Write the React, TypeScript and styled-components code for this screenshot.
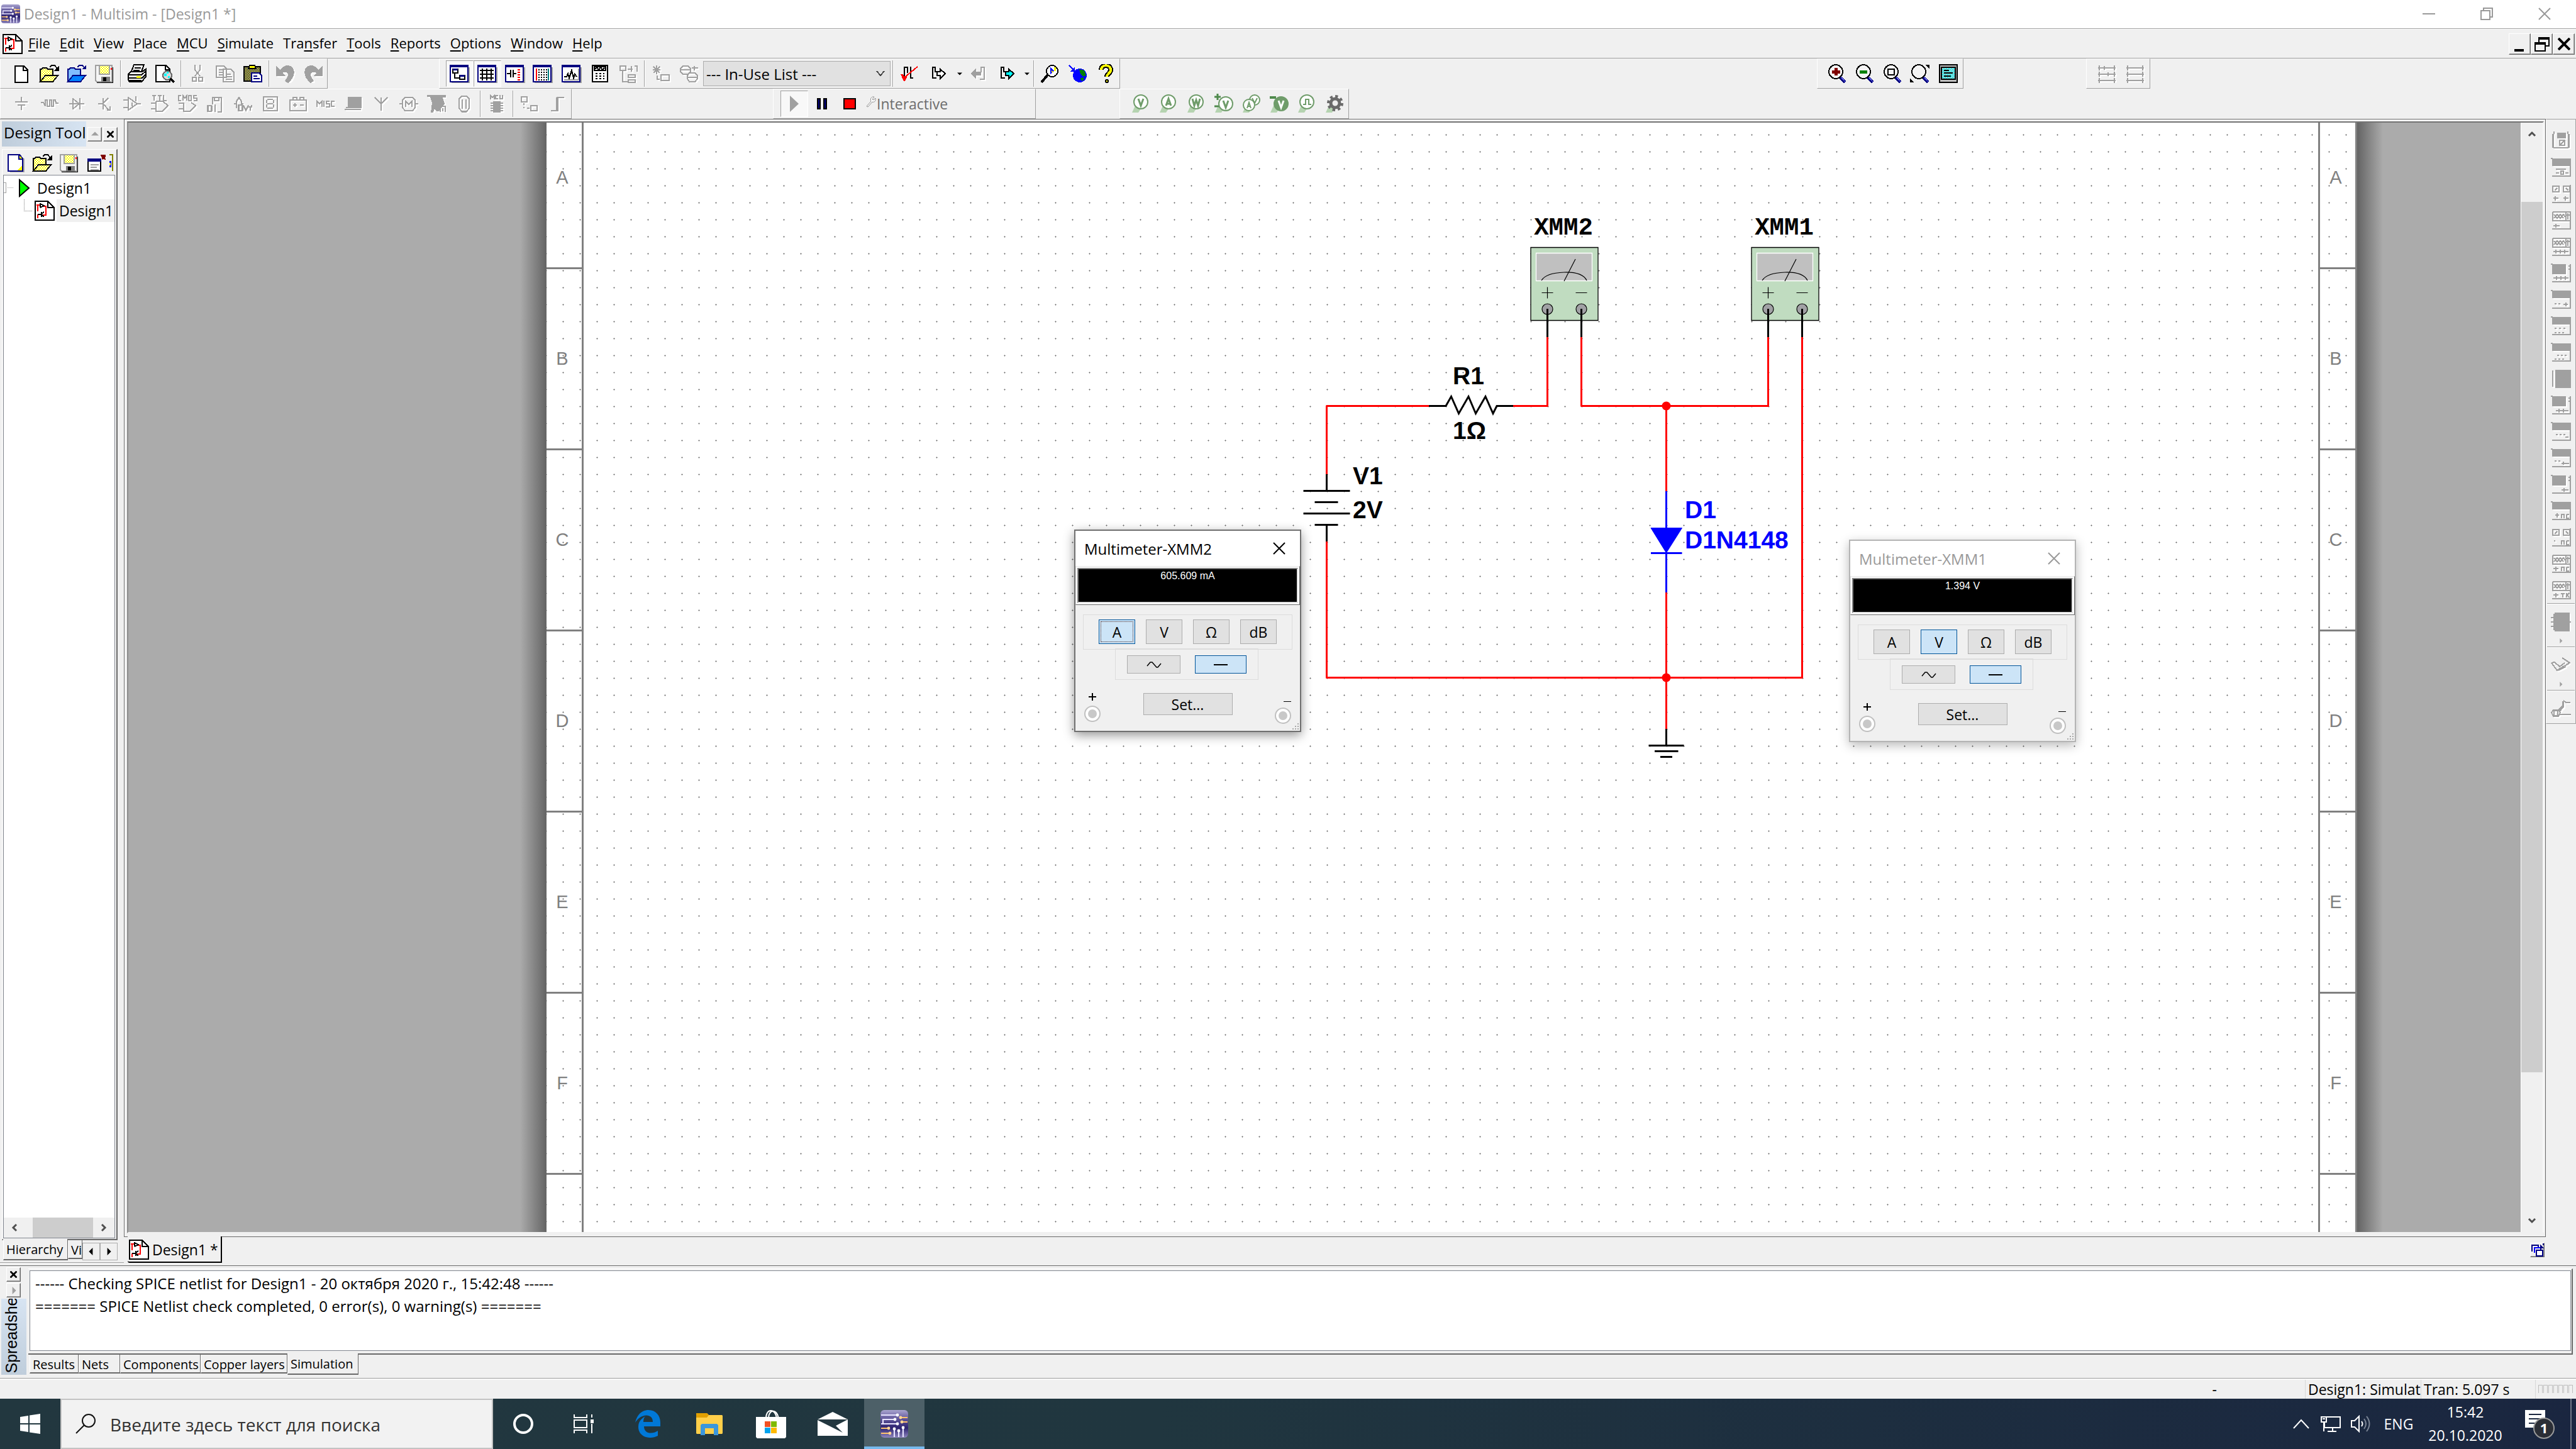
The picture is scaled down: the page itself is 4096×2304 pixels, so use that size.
import React from "react";
import styled, { createGlobalStyle, css } from "styled-components";

const UI = `"Open Sans", "Noto Sans", sans-serif`;
const FACE = "#f0f0f0";
const SHADE = "#a0a0a0";
const DARK = "#696969";
const NAVY = "#000080";

const Global = createGlobalStyle`
  * { box-sizing: border-box; }
  html, body, #root { height: 100%; }
  body { margin: 0; overflow: hidden; background: ${FACE}; font-family: ${UI}; font-size: 24px; color: #000; }
  button, input, select { font: inherit; color: inherit; margin: 0; padding: 0; border: 0; background: none; border-radius: 0; }
  svg { display: block; flex: none; }
`;

/* ---------- shell ---------- */

const Desktop = styled.div`
  display: flex;
  flex-direction: column;
  height: 100vh;
`;

const TitleBar = styled.header`
  display: flex;
  align-items: center;
  flex: none;
  height: 46px;
  padding: 0 4px 2px 2px;
  gap: 6px;
  background: #fff;
  border-bottom: 1px solid ${SHADE};
  color: #999;
`;

const Caption = styled.h1`
  flex: 1;
  margin: 0;
  font-size: 23px;
  font-weight: 400;
`;

const CaptionButtons = styled.div`
  display: flex;
`;

const CaptionButton = styled.button`
  display: grid;
  place-items: center;
  width: 92px;
  height: 43px;
`;

const MenuBar = styled.nav`
  display: flex;
  align-items: center;
  flex: none;
  height: 47px;
  padding: 0 2px 0 4px;
  border-top: 1px solid #fff;
  border-bottom: 1px solid ${SHADE};
`;

const MenuList = styled.div`
  display: flex;
  flex: 1;
  gap: 15px;
  padding: 0 0 3px 9px;
`;

const MenuItem = styled.button`
  font-size: 22px;
  line-height: 32px;
  u { text-underline-offset: 3px; text-decoration-thickness: 2px; }
`;

const raised = css`
  border: 1px solid;
  border-color: #fff ${DARK} ${DARK} #fff;
  box-shadow: inset -1px -1px 0 ${SHADE};
`;

const ChildButton = styled.button`
  ${raised}
  display: grid;
  place-items: center;
  width: 35px;
  height: 34px;
`;

const ToolRow = styled.div`
  display: flex;
  flex: none;
  height: 48px;
`;

const ToolGroup = styled.div<{ $before?: number; $lead?: number }>`
  display: flex;
  align-items: center;
  margin-left: ${(p) => p.$before ?? 0}px;
  padding-left: ${(p) => p.$lead ?? 11}px;
  border: 1px solid;
  border-color: #fff ${SHADE} ${SHADE} #fff;
`;

const ToolButton = styled.button<{ $on?: boolean; $w?: number }>`
  display: grid;
  place-items: center;
  flex: none;
  width: ${(p) => p.$w ?? 44}px;
  height: 42px;
  ${(p) =>
    p.$on &&
    css`
      background: #f8f8f8;
      border: 1px solid;
      border-color: ${SHADE} #fff #fff ${SHADE};
    `}
`;

const Divider = styled.i`
  width: 2px;
  height: 42px;
  margin: 0 3px;
  background: linear-gradient(90deg, ${SHADE} 50%, #fff 50%);
`;

const SelectWrap = styled.label`
  position: relative;
  display: block;
  width: 298px;
  svg { position: absolute; right: 9px; top: 15px; }
`;

const Select = styled.select`
  appearance: none;
  width: 100%;
  height: 40px;
  padding: 0 4px;
  background: #e1e1e1;
  border: 1px solid #adadad;
`;

const Mode = styled.span`
  width: 252px;
  color: #6d6d6d;
  font-size: 23px;
  line-height: 32px;
`;

/* ---------- workspace ---------- */

const Workspace = styled.main`
  display: flex;
  flex: 1;
  min-height: 0;
`;

const Toolbox = styled.aside`
  display: flex;
  flex-direction: column;
  flex: none;
  width: 197px;
  padding: 3px 10px 0 3px;
  border-top: 1px solid ${SHADE};
  border-bottom: 1px solid ${SHADE};
  margin-bottom: 4px;
`;

const PaneHead = styled.div`
  display: flex;
  align-items: center;
  gap: 2px;
  height: 40px;
`;

const PaneTitle = styled.h2`
  flex: 1;
  min-width: 0;
  height: 40px;
  margin: 0;
  padding-left: 3px;
  overflow: hidden;
  white-space: nowrap;
  font-size: 24px;
  font-weight: 400;
  line-height: 36px;
  background: linear-gradient(90deg, #bfcddb, #d7e4f2);
`;

const PinButton = styled.button`
  ${raised}
  display: grid;
  place-items: center;
  flex: none;
  width: 23px;
  height: 23px;
`;

const ToolboxBody = styled.div`
  display: flex;
  flex-direction: column;
  flex: 1;
  min-height: 0;
  margin-top: 4px;
  padding: 0 2px 1px 1px;
  border: 1px solid;
  border-color: #fff ${DARK} ${DARK} #fff;
  border-width: 1px 2px 2px 1px;
`;

const ToolboxIcons = styled.div`
  display: flex;
  height: 40px;
  padding-right: 4px;
  overflow: hidden;
`;

const SmallButton = styled.button`
  display: grid;
  place-items: center;
  flex: none;
  width: 43px;
  height: 42px;
  &:first-child { width: 40px; }
`;

const Tree = styled.ul`
  display: flex;
  flex-direction: column;
  flex: 1;
  margin: 0;
  padding: 2px 0 0;
  overflow: hidden;
  list-style: none;
  background: #fff;
  border: 1px solid #828790;
`;

const TreeItem = styled.li<{ $sel?: boolean }>`
  display: flex;
  align-items: center;
  height: 36px;
  gap: 3px;
  white-space: nowrap;
  font-size: 23px;
  line-height: 36px;
  span {
    padding: 0 4px;
    background: ${(p) => (p.$sel ? FACE : "transparent")};
  }
`;

const HScroll = styled.div`
  display: flex;
  height: 32px;
  margin-top: auto;
  background: ${FACE};
`;

const ScrollButton = styled.button<{ $w: number; $h: number }>`
  display: grid;
  place-items: center;
  width: ${(p) => p.$w}px;
  height: ${(p) => p.$h}px;
`;

const Part = styled.div<{ $grow: number; $thumb?: boolean }>`
  flex: ${(p) => p.$grow} 0 0;
  background: ${(p) => (p.$thumb ? "#cdcdcd" : "transparent")};
`;

const TabLine = styled.div<{ $pad?: number; $foot?: number }>`
  display: flex;
  align-items: flex-start;
  padding-left: ${(p) => p.$pad ?? 0}px;
  padding-bottom: ${(p) => p.$foot ?? 0}px;
`;

const Tab = styled.button<{ $on?: boolean; $w: number }>`
  width: ${(p) => p.$w}px;
  height: ${(p) => (p.$on ? 34 : 30)}px;
  margin-top: ${(p) => (p.$on ? -2 : 0)}px;
  padding: 2px 0 0 4px;
  overflow: hidden;
  text-align: left;
  white-space: nowrap;
  font-size: 20px;
  line-height: 28px;
  background: ${FACE};
  border: solid;
  border-width: 0 1px 2px 1px;
  border-color: ${DARK} ${DARK} ${DARK} #fff;
`;

const Spinner = styled.button`
  display: grid;
  place-items: center;
  width: 28px;
  height: 28px;
  margin-top: 4px;
  border: 1px solid #adadad;
  background: ${FACE};
`;

const DocArea = styled.section`
  display: flex;
  flex-direction: column;
  flex: 1;
  min-width: 0;
`;

const Frame = styled.div`
  display: flex;
  flex: 1;
  min-height: 0;
  padding: 3px 2px 5px 4px;
  border: 1px solid ${DARK};
  box-shadow: inset 1px 1px 0 #fff;
`;

const Viewport = styled.div`
  display: flex;
  flex: 1;
  min-width: 0;
  border: 2px solid;
  border-color: #747474 #f8f8f8 #f0f0f0 #8c8c8c;
`;

const Canvas = styled.div`
  position: relative;
  flex: 1;
  min-width: 0;
  overflow: hidden;
  background: #ababab;
  svg.sheet { width: 100%; height: 100%; }
`;

const VScroll = styled.div`
  display: flex;
  flex-direction: column;
  width: 35px;
  border-left: 1px solid #fff;
  background: ${FACE};
`;

const DocTabs = styled.div`
  display: flex;
  align-items: flex-start;
  justify-content: space-between;
  height: 45px;
  padding: 0 2px 0 6px;
`;

const DocTab = styled.button`
  display: flex;
  align-items: center;
  gap: 5px;
  height: 42px;
  margin-top: -1px;
  padding: 2px 4px 0 2px;
  font-size: 23px;
  background: ${FACE};
  border: solid #000;
  border-width: 0 2px 2px 0;
  border-bottom-left-radius: 3px;
`;

const WindowsSlot = styled.div`
  padding-top: 9px;
`;

const Instruments = styled.div`
  display: flex;
  flex-direction: column;
  align-items: center;
  align-self: flex-start;
  width: 48px;
  padding: 13px 1px 2px 0;
  border: 1px solid ${SHADE};
  border-left: 1px solid #fff;
  hr {
    width: 44px;
    margin: 0 0 7px;
    border: 0;
    border-top: 1px solid ${SHADE};
    border-bottom: 1px solid #fff;
  }
`;

const InstrumentButton = styled.button`
  display: grid;
  place-items: center;
  width: 44px;
  height: 42px;
`;

const MoreButton = styled.button`
  display: grid;
  place-items: center;
  width: 44px;
  height: 18px;
`;

/* ---------- multimeter ---------- */

const Meter = styled.section<{ $x: number; $y: number; $active: boolean }>`
  position: absolute;
  left: ${(p) => p.$x}px;
  top: ${(p) => p.$y}px;
  width: 361px;
  padding-bottom: 7px;
  background: ${FACE};
  border: 2px solid ${(p) => (p.$active ? "#6f6f6f" : "#b4b4b4")};
  box-shadow: 0 5px 16px rgba(0, 0, 0, ${(p) => (p.$active ? 0.42 : 0.28)});
`;

const MeterTitle = styled.header<{ $active: boolean }>`
  display: flex;
  align-items: center;
  justify-content: space-between;
  height: 56px;
  padding: 0 22px 0 14px;
  background: #fff;
  color: ${(p) => (p.$active ? "#000" : "#999")};
`;

const CloseButton = styled.button`
  display: grid;
  place-items: center;
  width: 22px;
  height: 22px;
`;

const ReadingFrame = styled.div`
  padding: 2px;
  background: #fff;
  border: 1px solid;
  border-color: #e3e3e3 ${DARK} ${DARK} #e3e3e3;
`;

const Reading = styled.output`
  display: block;
  height: 56px;
  padding-top: 2px;
  background: #000;
  border: 2px solid;
  border-color: #808080 #e3e3e3 #e3e3e3 #808080;
  color: #fff;
  font-family: "Liberation Sans", Arial, sans-serif;
  font-size: 16px;
  line-height: 18px;
  text-align: center;
`;

const ModeGroup = styled.div`
  display: flex;
  justify-content: center;
  gap: 17px;
  height: 56px;
  margin: 15px 12px 0;
  padding-top: 7px;
  border: 1px solid #dcdcdc;
`;

const WaveGroup = styled(ModeGroup)`
  width: 228px;
  height: 50px;
  margin: -2px auto 0 63px;
  padding-top: 10px;
  gap: 23px;
`;

const MeterButton = styled.button<{ $w: number; $h: number; $on?: boolean; $focus?: boolean }>`
  display: grid;
  place-items: center;
  width: ${(p) => p.$w}px;
  height: ${(p) => p.$h}px;
  font-size: 23px;
  background: ${(p) => (p.$on ? "#cce4f7" : "#e1e1e1")};
  border: 1px solid ${(p) => (p.$on ? "#005499" : "#adadad")};
  outline: ${(p) => (p.$focus ? "1px dotted #402020" : "none")};
  outline-offset: -4px;
`;

const MeterFoot = styled.div`
  display: flex;
  justify-content: space-between;
  align-items: flex-start;
  margin-top: 18px;
  padding: 0 11px;
`;

const SetSlot = styled.div`
  padding-top: 3px;
`;

const Grip = styled.svg`
  position: absolute;
  right: 1px;
  bottom: 1px;
`;

/* ---------- spreadsheet & status ---------- */

const Sheet = styled.section`
  display: flex;
  flex: none;
  height: 179px;
  border-top: 1px solid ${DARK};
`;

const SheetRail = styled.div`
  display: flex;
  flex-direction: column;
  gap: 2px;
  width: 45px;
  padding: 2px 3px 5px 2px;
`;

const RailButton = styled(PinButton)`
  margin-left: 8px;
`;

const RailTitle = styled.h2`
  display: flex;
  align-items: flex-end;
  flex: 1;
  min-height: 0;
  margin: 0;
  padding: 0 0 3px 1px;
  overflow: hidden;
  background: linear-gradient(0deg, #bfcddb, #d7e4f2);
  font: 400 25px/30px "Liberation Sans", Arial, sans-serif;
  span {
    flex: none;
    white-space: nowrap;
    writing-mode: vertical-rl;
    transform: rotate(180deg);
  }
`;

const SheetMain = styled.div`
  display: flex;
  flex-direction: column;
  flex: 1;
  min-width: 0;
  padding: 4px 5px 0 0;
`;

const ListFrame = styled.div`
  flex: 1;
  min-height: 0;
  padding: 2px 1px 4px 2px;
  border: solid;
  border-width: 1px 2px 2px 0;
  border-color: #fff ${DARK} ${DARK} #fff;
`;

const Log = styled.div`
  height: 100%;
  padding: 2px 8px;
  background: #fff;
  border: 1px solid #828790;
  line-height: 36px;
  p { margin: 0; }
`;

const StatusBar = styled.footer`
  display: flex;
  flex: none;
  height: 33px;
  padding-top: 2px;
  border-top: 1px solid ${SHADE};
  box-shadow: inset 0 2px 0 #fafafa;
  font-size: 23px;
  line-height: 31px;
`;

const StatusCell = styled.div<{ $w: number }>`
  width: ${(p) => p.$w}px;
  height: 30px;
  padding-left: 4px;
  overflow: hidden;
  white-space: nowrap;
  border-left: 1px solid #d7d7d7;
`;

const StatusMain = styled.div`
  flex: 1;
  padding-right: 140px;
  text-align: right;
`;

/* ---------- taskbar ---------- */

const Taskbar = styled.footer`
  display: flex;
  flex: none;
  height: 80px;
  background: linear-gradient(90deg, #22373f, #20363f 45%, #1a2640);
  color: #fff;
  font-size: 23px;
`;

const TaskButton = styled.button<{ $on?: boolean }>`
  display: grid;
  place-items: center;
  width: 96px;
  height: 80px;
  ${(p) =>
    p.$on &&
    css`
      background: #4d6068;
      box-shadow: inset 0 -4px 0 #76b9ed;
    `}
`;

const Apps = styled.div`
  display: flex;
  gap: 2px;
  margin-left: 6px;
  flex: 1;
`;

const Search = styled.label`
  display: flex;
  align-items: center;
  gap: 22px;
  width: 688px;
  padding-left: 22px;
  background: #f2f2f2;
  border: 2px solid #c3c3c3;
  color: #000;
  input {
    flex: 1;
    padding-top: 2px;
    font-size: 28px;
    outline: none;
    &::placeholder { color: #333; opacity: 1; }
  }
`;

const Tray = styled.div`
  display: flex;
  align-items: center;
  button { flex: none; }
`;

const TrayButton = styled.button<{ $w: number }>`
  display: grid;
  place-items: center;
  width: ${(p) => p.$w}px;
  height: 80px;
  line-height: 37px;
  white-space: pre;
`;

const Peek = styled.button`
  width: 9px;
  height: 80px;
  border-left: 2px solid #6f7888;
`;

/* ---------- icons ---------- */

type IconProps = { w?: number; h?: number; children: React.ReactNode };
const Icon = ({ w = 32, h = 30, children }: IconProps) => (
  <svg width={w} height={h} viewBox={`0 0 ${w} ${h}`} shapeRendering="crispEdges" fill="none" strokeWidth="2" aria-hidden="true">
    {children}
  </svg>
);

/* A disabled glyph: the grey shape over its white drop edge. */
const Grey = ({ d, fill, w, h }: { d: string; fill?: string; w?: number; h?: number }) => (
  <Icon w={w} h={h}>
    <g transform="translate(2 2)">
      <path d={d} stroke="#fff" />
      {fill && <path d={fill} fill="#fff" />}
    </g>
    <path d={d} stroke={SHADE} />
    {fill && <path d={fill} fill={SHADE} />}
  </Icon>
);

const HiddenDefs = styled.svg`
  position: absolute;
`;

const Defs = () => (
  <HiddenDefs width="0" height="0" aria-hidden="true">
    <defs>
      <pattern id="hatch" width="4" height="4" patternUnits="userSpaceOnUse">
        <rect width="4" height="4" fill="#ff0" />
        <path d="M0 0h2v2H0zM2 2h2v2H2z" fill="#fff" />
      </pattern>
      <pattern id="olive" width="4" height="4" patternUnits="userSpaceOnUse">
        <rect width="4" height="4" fill="#808000" />
        <path d="M0 0h2v2H0zM2 2h2v2H2z" fill="#808080" />
      </pattern>
      <pattern id="aqua" width="4" height="4" patternUnits="userSpaceOnUse">
        <rect width="4" height="4" fill="#0ff" />
        <path d="M0 0h2v2H0zM2 2h2v2H2z" fill="#c0c0c0" />
      </pattern>
      <linearGradient id="chip" x1="0" y1="0" x2="0" y2="1">
        <stop offset="0" stopColor="#a9a4cf" />
        <stop offset=".35" stopColor="#5a5096" />
        <stop offset=".65" stopColor="#2c2270" />
        <stop offset="1" stopColor="#8e86bd" />
      </linearGradient>
    </defs>
  </HiddenDefs>
);

const NewFile = () => (
  <Icon w={26}>
    <path d="M3 3h14l6 6v20H3z" fill="#fff" stroke="#000" />
    <path d="M16 3v7h7" stroke="#000" />
  </Icon>
);
const NewDesign = () => (
  <Icon w={30}>
    <path d="M28 8v22H6" stroke="#aaa" />
    <path d="M3 2h18l5 6v20H3z" fill="#fff" stroke={NAVY} />
    <path d="M20 3l6 6h-6zM25 20v7h-8z" fill="#ff0" />
    <path d="M20 3v6h6" stroke={NAVY} />
  </Icon>
);
const OpenFile = ({ blue }: { blue?: boolean }) => {
  const ink = blue ? NAVY : "#000";
  return (
    <Icon>
      <path d="M2 28V8h2l2-2h6l2 2h8v10" fill={blue ? "#7fbcff" : "url(#hatch)"} stroke={ink} />
      <path d="M10 18h20l-8 10H2z" fill={blue ? "#0080ff" : "url(#hatch)"} stroke={ink} />
      <path d="M17 5l3-3h5l4 5" stroke={ink} />
      <path d={blue ? "M24 8h7V2z" : "M23 11h9V3z"} fill={ink} />
    </Icon>
  );
};
const Floppy = () => (
  <Icon>
    <path d="M4 29h25V5" stroke="#000" />
    <path d="M2 2h26v26H4l-2-2z" fill="#f4f4f4" stroke={SHADE} />
    <path d="M8 2h16v14H8z" fill="url(#hatch)" stroke={SHADE} />
    <path d="M11 20h14v9H11z" fill="#808080" />
    <path d="M14 21h5v6h-5z" fill="#000" />
    <path d="M26 6h2v3h-2z" fill="red" />
  </Icon>
);
const Printer = () => (
  <Icon>
    <path d="M11 1h16l-5 13H6z" fill="#fff" stroke="#000" />
    <path d="M12 6h10M10 10h10" stroke="#000" />
    <path d="M2 16l4-4h18l6-4v12l-7 8H4l-2-3z" fill="#fff" stroke="#000" />
    <path d="M2 17h21l7-6M2 22h22l6-6M3 26h20" stroke="#000" />
    <path d="M15 19h7v3h-7z" fill="#ff0" />
  </Icon>
);
const Preview = () => (
  <Icon>
    <path d="M2 2h16l6 6v20H2z" fill="#fff" stroke="#000" />
    <path d="M17 2v7h7" stroke="#000" />
    <circle cx="20" cy="18" r="7" fill="#d8d8d8" stroke="#666" />
    <path d="M15 15h4v-3h3v3h-3v4h-4zM21 19h3v3h-3z" fill="#0ff" />
    <path d="M25 23l6 6" stroke="#000" strokeWidth="4" />
  </Icon>
);
const Paste = () => (
  <Icon>
    <path d="M2 4h26v23H2z" fill="url(#olive)" stroke="#000" />
    <path d="M9 7l2-5h8l2 5z" fill="#ff0" stroke="#000" />
    <path d="M14 14h12l4 4v10H14z" fill="#fff" stroke={NAVY} />
    <path d="M17 19h6M17 23h10" stroke={NAVY} />
  </Icon>
);
const Panel = ({ children }: { children: React.ReactNode }) => (
  <Icon>
    <path d="M31 5v25H3" stroke={SHADE} />
    <path d="M1 3h28v25H1z" fill="#fff" stroke={NAVY} />
    <path d="M0 1h30v4H0z" fill={NAVY} />
    {children}
  </Icon>
);
const PanelTree = () => (
  <Panel>
    <path d="M5 8h8v6H5zM16 18h8v6h-8zM8 14v8h8" stroke="#000" />
    <path d="M5 7h8v3H5zM16 17h8v3h-8z" fill={NAVY} />
  </Panel>
);
const PanelGrid = () => (
  <Panel>
    <path d="M4 10h22M4 16h22M4 22h22M8 7v19M15 7v19M22 7v19" stroke="#000" />
  </Panel>
);
const PanelParts = () => (
  <Panel>
    <path d="M3 15h6M9 9v12M13 9v12M13 15h5" stroke="#000" />
    <path d="M22 8v18" stroke="red" strokeWidth="4" strokeDasharray="2 2" />
  </Panel>
);
const PanelList = () => (
  <Panel>
    <path d="M6 7v19" stroke="red" />
    <path d="M25 7v19" stroke="#008080" />
    <path d="M10 8v18M14 8v18M18 8v18M22 8v18" stroke="#000" strokeDasharray="2 2" />
  </Panel>
);
const PanelGraph = () => (
  <Panel>
    <path d="M27 7v18H4" stroke={SHADE} />
    <path d="M4 20h4l2-5 2 7 4-12 3 12 2-6 3 4" stroke="#000" />
  </Panel>
);
const Calculator = () => (
  <Icon>
    <path d="M3 2h24v26H3z" fill="#fff" stroke="#000" />
    <path d="M6 4h18v6H6z" fill="#fff" stroke="#000" />
    <path d="M7 8l3-3 3 4 3-4 3 4 3-3" stroke="#000" />
    <path d="M8 15h14M8 19h14M8 23h14" stroke="#000" strokeDasharray="3 3" />
  </Icon>
);
const CheckRule = () => (
  <Icon>
    <path d="M7 4v18M17 4v18M7 5h5v9M21 22h-5" stroke="#000" />
    <path d="M6 22L28 4" stroke="red" />
    <path d="M1 16h4l2 4 4-3v4l-3 6H6z" fill="red" />
  </Icon>
);
const Transfer = ({ fill }: { fill: string }) => (
  <Icon>
    <path d="M4 4v18h6M4 5h4v7h4" stroke="#000" />
    <path d="M11 12h5V8l8 7-8 8v-5h-5z" fill={fill} stroke="#000" />
  </Icon>
);
const FindExample = () => (
  <Icon>
    <path d="M2 29l10-12" stroke="#000" strokeWidth="4" />
    <circle cx="19" cy="11" r="9" fill="#fff" stroke="#000" />
    <path d="M16 5v11l6-5z" fill="#00f" />
    <path d="M18 9v4h3zM22 5h3v6h-3z" fill="#ff0" />
  </Icon>
);
const Globe = () => (
  <Icon>
    <circle cx="19" cy="18" r="11" fill="#00f" />
    <path d="M18 8l8 2 3 8-5 2-4-4zM20 22l5-1v5h-4z" fill="#008000" />
    <path d="M2 2l9 9" stroke="#00f" />
    <path d="M11 4v8H4z" fill="#00f" />
  </Icon>
);
const Help = () => (
  <Icon>
    <path d="M9 9c0-9 15-9 15 0 0 6-6 6-6 11" stroke="#000" strokeWidth="8" />
    <path d="M9 9c0-9 15-9 15 0 0 6-6 6-6 11" stroke="#ff0" strokeWidth="4" />
    <circle cx="18" cy="27" r="2" fill="#ff0" stroke="#000" />
  </Icon>
);
const Lens = ({ children }: { children?: React.ReactNode }) => (
  <Icon>
    <path d="M20 20l9 9" stroke={NAVY} strokeWidth="5" />
    <path d="M21 19l8 9" stroke="#8080ff" strokeWidth="1" />
    <circle cx="14" cy="12" r="11" fill="#f4f4f4" stroke="#000" />
    {children}
  </Icon>
);
const FullScreen = () => (
  <Icon>
    <path d="M2 1h28v28H2z" fill="#c0c0c0" stroke="#000" />
    <path d="M5 5h22v19H5z" fill="url(#aqua)" stroke="#000" />
    <path d="M9 10h8M9 14h14M9 19h11" stroke="#000" />
  </Icon>
);
const SchematicDoc = () => (
  <Icon w={32} h={32}>
    <path d="M1 1h20l10 10v20H1z" fill="#fff" stroke="#000" />
    <path d="M21 1v10h10" stroke="#000" />
    <path d="M3 7h5M14 9h4v14h-6M5 7v10M5 28v-6" stroke="red" />
    <path d="M9 4v7M9 5l6 3-6 3M11 18v8M5 22h6M11 21l4-3M11 22l4 4" stroke="#000" />
  </Icon>
);
const Chip = ({ size }: { size: number }) => (
  <svg width={size} height={size} viewBox="0 0 44 44" fill="none" strokeWidth="2.2" aria-hidden="true">
    <rect width="44" height="44" rx="6" fill="url(#chip)" />
    <path d="M1 8h25M4 22v-7h18M1 22h25M22 43V29M29 43V33M36 43V28" stroke="#e8e4ff" />
    <path d="M32 12h11M34 19h9M1 29h12M1 37h13" stroke="#ffc36b" />
    <g fill="#fff">
      <circle cx="27" cy="8" r="2.4" /><circle cx="23" cy="15" r="2.4" /><circle cx="27" cy="22" r="2.4" />
      <circle cx="22" cy="30" r="2.4" /><circle cx="29" cy="33" r="2.4" /><circle cx="36" cy="28" r="2.4" />
    </g>
    <g fill="#ffd695">
      <circle cx="32" cy="12" r="2.4" /><circle cx="34" cy="19" r="2.4" /><circle cx="13" cy="29" r="2.4" /><circle cx="15" cy="37" r="2.4" />
    </g>
  </svg>
);
const Cross = ({ s = 20, c = "currentColor", w = 2 }: { s?: number; c?: string; w?: number }) => (
  <svg width={s} height={s} viewBox="0 0 20 20" aria-hidden="true">
    <path d="M1 1l18 18M19 1L1 19" stroke={c} strokeWidth={w} />
  </svg>
);
const Chevron = ({ turn = 0 }: { turn?: number }) => (
  <svg width="14" height="14" viewBox="0 0 14 14" aria-hidden="true">
    <path d="M2 4l5 5 5-5" transform={`rotate(${turn} 7 7)`} fill="none" stroke="#505050" strokeWidth="3" />
  </svg>
);
const Arrow = ({ turn = 0, c = "#000", s = 10 }: { turn?: number; c?: string; s?: number }) => (
  <svg width={s} height={s} viewBox="0 0 10 10" aria-hidden="true">
    <path d="M3 0l5 5-5 5z" transform={`rotate(${turn} 5 5)`} fill={c} />
  </svg>
);

const Probe = ({ kind }: { kind: string }) => {
  const ink = "#6f9c6a";
  const lift = kind === "+V" || kind === "-V";
  return (
    <svg width="34" height="32" viewBox="0 0 34 32" fill="none" strokeWidth="2" aria-hidden="true">
      <path d="M9 17l-6 13h10l4-6z" fill="#b5d3b0" />
      {kind === "AV" && (
        <>
          <circle cx="22" cy="10" r="8" fill="#fff" stroke={ink} />
          <path d="M18 7l4 8 4-8" stroke={ink} />
        </>
      )}
      {kind === "+V" && <path d="M7 0v10M2 5h10M2 20h10" stroke="#4f8a4c" strokeWidth="3" />}
      {kind === "-V" && <path d="M2 6h10" stroke="#4f8a4c" strokeWidth="4" />}
      {kind === "gear" ? (
        <g stroke="#6a6a6a">
          <circle cx="18" cy="15" r="7" strokeWidth="5" fill="#eee" />
          <circle cx="18" cy="15" r="11" strokeWidth="4" strokeDasharray="4.3 4.3" />
        </g>
      ) : (
        <circle cx={kind === "AV" ? 13 : lift ? 20 : 17} cy={lift ? 16 : kind === "AV" ? 18 : 13} r={kind === "AV" ? 9 : 11} fill={kind === "-V" ? ink : "#fff"} stroke={ink} />
      )}
      {kind === "V" && <path d="M13 8l4 11 4-11" stroke={ink} strokeWidth="3" />}
      {lift && <path d="M16 11l4 11 4-11" stroke={kind === "-V" ? "#fff" : ink} strokeWidth="3" />}
      {kind === "A" && <path d="M13 19l4-11 4 11M14 16h6" stroke={ink} strokeWidth="3" />}
      {kind === "AV" && <path d="M10 23l3-9 3 9M11 20h4" stroke={ink} />}
      {kind === "W" && <path d="M11 8l3 11 3-9 3 9 3-11" stroke={ink} strokeWidth="3" />}
      {kind === "pulse" && <path d="M11 17h4V9h5v8h4" stroke={ink} />}
    </svg>
  );
};

const partGlyphs: { name: string; d: string; fill?: string }[] = [
  { name: "Source", d: "M16 4v8M6 12h20M10 17h12M16 17v8" },
  { name: "Basic", d: "M3 13h4l3 6V9h3v10h4V9h3v10h3V9h3l1 5h4" },
  { name: "Diode", d: "M4 15h24M10 6v18M10 7l10 8-10 8M21 6v18" },
  { name: "Transistor", d: "M6 15h8M14 6v18M14 14l8-8M15 16l8 9M20 25h5v-6" },
  { name: "Analog", d: "M2 9h8M2 21h8M10 4v22M10 5l14 10-14 10M24 15h6M16 13v6M22 3v8" },
  { name: "TTL", d: "M4 2h6M7 2v8M13 2h6M16 2v8M22 1v9h5M2 14h8M2 23h8M10 11v16h10l9-9-8-7H10" },
  { name: "CMOS", d: "M6 2H2v8h4M9 10V2l3 4 3-4v8M18 2h4v8h-4zM31 2h-5v4h5v4h-5M2 14h8M2 23h8M10 13v14h10l9-9-7-5" },
  { name: "Misc Digital", d: "M12 16V5h14v23h-6M15 5v5h7V5M4 18h6v9H4zM16 16v12", fill: "M3 18h3v9H3zM9 18h3v9H9z" },
  { name: "Mixed", d: "M2 15h4v-4l4-6 4 6v4h3M6 16v6M9 17h6v9H9zM17 17l4 9 4-9M25 20h5v-3M28 26v-7", fill: "M8 17h3v9H8zM14 17h3v9h-3z" },
  { name: "Indicator", d: "M5 4h22v22H5zM11 8h9M11 15h9M11 22h9M10 9v5M21 9v5M10 16v5M21 16v5" },
  { name: "Power", d: "M3 9h26v17H3zM8 9V5h6v4M19 9V5h6v4M8 17h6M11 14v6M19 17h6" },
  { name: "Miscellaneous", d: "M2 20v-9l4 4 4-4v9M13 10v10M22 11h-5v4h5v5h-6M30 11h-5v8h5" },
  { name: "Advanced Peripherals", d: "M2 24h26M4 21h6", fill: "M7 4h22v18H7z" },
  { name: "RF", d: "M16 5v21M6 5l10 10L26 5" },
  { name: "Electromechanical", d: "M1 15h6M25 15h6M10 5h12l4 4v12l-4 5H10l-4-5V9zM11 20v-9l5 5 5-5v9" },
  { name: "NI", d: "M22 28v-9h8v9M26 22v5", fill: "M1 1h30v4h-5l3 10-9 12h-4l-3-4-2 6H7l2-16-3-9H1z" },
  { name: "Connector", d: "M12 3h8l4 4v15l-4 5h-8l-4-5V7zM13 8v15M19 8v15M12 28h8" },
];
const mcuGlyph = {
  d: "M6 8V2l3 3 3-3v6M18 2h-4v5h4M21 1v6h4V1M6 14h20M6 18h20M6 22h20M6 26h20",
  fill: "M10 11h12v18H10z",
};
const hierGlyph = { d: "M3 4h9v8H3zM18 18h10v8H18zM7 14v3M7 20v2M12 22h4" };
const busGlyph = { d: "M6 26h10V5h11", fill: "M14 5h4v22h-4z" };

type Instrument = { name: string; screen: "meter" | "solid" | "wide" | "twin" | "wave" | "chip"; row: string };
const instruments: Instrument[] = [
  { name: "Multimeter", screen: "meter", row: "" },
  { name: "Function generator", screen: "solid", row: "M8 18h16M8 24h5M16 21h4v5h-4zM23 24h5" },
  { name: "Wattmeter", screen: "twin", row: "M4 22h8M20 22h8M7 19v7M23 19v7" },
  { name: "Oscilloscope", screen: "wave", row: "M4 24h10M8 21v6" },
  { name: "Four channel oscilloscope", screen: "wave", row: "M4 23h24M8 20v6M15 20v6M22 20v6" },
  { name: "Bode plotter", screen: "wide", row: "M4 23h24M9 20v6M16 20v6M23 20v6" },
  { name: "Frequency counter", screen: "solid", row: "M6 22h3M12 22h3M20 23h7M24 20v6" },
  { name: "Word generator", screen: "solid", row: "M6 19h3M13 19h3M20 19h3M6 26h3M12 26h3M18 26h3" },
  { name: "Logic converter", screen: "solid", row: "M10 20h3M16 20h3M22 20h3M6 26h3M12 26h3M18 26h3" },
  { name: "Logic analyzer", screen: "chip", row: "" },
  { name: "IV analyzer", screen: "wide", row: "M8 24h20M13 21v6M20 21v6" },
  { name: "Distortion analyzer", screen: "solid", row: "M8 20h3M14 20h3M20 20h3M23 24h5" },
  { name: "Spectrum analyzer", screen: "solid", row: "M6 20h3M12 20h3M17 24h12M20 21v5" },
  { name: "Network analyzer", screen: "wide", row: "M17 24h11M21 21v6" },
  { name: "Agilent generator", screen: "solid", row: "M7 22h6M10 19v7M17 27v-6h4v6M25 21h4M25 21v6h4" },
  { name: "Agilent multimeter", screen: "twin", row: "M6 20v2M17 27v-6h4v6M25 21h4M25 21v6h4" },
  { name: "Agilent oscilloscope", screen: "wave", row: "M4 23h8M8 20v7M17 27v-6h4v6M25 21h4M25 21v6h4" },
  { name: "Tektronix oscilloscope", screen: "wave", row: "M4 23h8M8 20v7M16 21h6M19 21v6M25 20v7M29 20l-3 3 3 4" },
];
const InstrumentIcon = ({ screen, row }: Instrument) => {
  const frame = "M31 1v28H2";
  if (screen === "meter") return <Grey d="M4 26h24M14 14h8v8h-8zM15 21l6-6" fill="M10 2h14v9H10zM2 4h3v22H2zM27 4h3v22h-3zM4 0h2v4H4zM26 0h2v4h-2z" />;
  if (screen === "chip") return <Grey d="M3 2v26" fill="M7 1h25v29H7z" />;
  if (screen === "solid") return <Grey d={frame + row} fill="M0 0h3v1h29v12H2V2H0z" />;
  if (screen === "wide") return <Grey d={frame + row + "M28 4h3M28 9h3"} fill="M0 0h3v1h21v16H2V2H0z" />;
  if (screen === "twin") return <Grey d={frame + row + "M3 3h10v9H3zM20 3h10v9H20zM6 10l4-4M24 6l4 4"} />;
  return <Grey d={frame + row + "M3 2h28M3 2v14h28M24 2v14M5 12l5-6 5 6 5-6 3 4M5 6l5 6 5-6 5 6M27 4v10M25 7h5"} />;
};

/* ---------- schematic ---------- */

const METERS = [
  { x: 2434, label: "XMM2" },
  { x: 2785, label: "XMM1" },
];
const ZONES = ["A", "B", "C", "D", "E", "F"];

const Schematic = () => (
  <svg className="sheet" role="img" aria-label="Design1 schematic">
    <defs>
      <pattern id="dots" x="4" y="25" width="27" height="27" patternUnits="userSpaceOnUse">
        <path d="M0 0h1v1H0z" fill="#707070" />
        <path d="M1 0h1v1H1zM26 0h1v1h-1zM0 1h1v1H0zM0 26h1v1H0z" fill="#a4a4a4" />
      </pattern>
      <linearGradient id="edgeL"><stop offset="0" stopColor="#ababab" /><stop offset="1" stopColor="#646464" /></linearGradient>
      <linearGradient id="edgeR"><stop offset="0" stopColor="#646464" /><stop offset="1" stopColor="#ababab" /></linearGradient>
    </defs>
    <g transform="translate(-204 -195)">
      <rect x="827" y="195" width="42" height="2200" fill="url(#edgeL)" />
      <rect x="3748" y="195" width="41" height="2200" fill="url(#edgeR)" />
      <rect x="869" y="195" width="2877" height="2200" fill="#fff" />
      <rect x="869" y="195" width="2877" height="2200" fill="url(#dots)" shapeRendering="crispEdges" />
      <g stroke="#808080" strokeWidth="3">
        <path d="M926.5 195v2200M3687.5 195v2200M3746.5 195v2200" />
        {ZONES.map((z, i) => (
          <path key={z} d={`M869 ${426.5 + 288 * i}h57M3688 ${426.5 + 288 * i}h58`} />
        ))}
      </g>
      <g fill="#808080" fontFamily='"Liberation Sans", Arial, sans-serif' fontSize="29" textAnchor="middle">
        {ZONES.map((z, i) => (
          <React.Fragment key={z}>
            <text x="894" y={292 + 288 * i}>{z}</text>
            <text x="3714" y={292 + 288 * i}>{z}</text>
          </React.Fragment>
        ))}
      </g>

      {METERS.map((m) => (
        <g key={m.label} fill="none" stroke="#000">
          <path d={`M${m.x} 393.5h107v116h-107z`} fill="#c0dcc0" strokeWidth="1.3" />
          <path d={`M${m.x + 8.5} 402.5h89v44h-89z`} fill="#c0c0c0" stroke="#fff" strokeWidth="1.3" />
          <path d={`M${m.x + 17} 446q7-12 36-13t36 13M${m.x + 53} 447l18-35`} strokeWidth="1.2" />
          <path d={`M${m.x + 17.5} 465.5h18M${m.x + 26.5} 456.5v18M${m.x + 71.5} 465.5h18`} strokeWidth="1.2" />
          <circle cx={m.x + 26.5} cy="491.5" r="8.5" fill="#a0a0a4" strokeWidth="1.2" />
          <circle cx={m.x + 80.5} cy="491.5" r="8.5" fill="#a0a0a4" strokeWidth="1.2" />
          <path d={`M${m.x + 26.5} 491v46M${m.x + 80.5} 491v46`} strokeWidth="3" />
        </g>
      ))}

      <g fill="none" stroke="red" strokeWidth="3">
        <path d="M2109.5 755V645.5H2273M2405 645.5h55.5V536M2514.5 536v109.5h297V536M2865.5 536v541.5h-756V860" strokeLinejoin="round" />
        <path d="M2649.5 645v136M2649.5 941v219" />
      </g>
      <circle cx="2649.5" cy="645.5" r="7" fill="red" />
      <circle cx="2649.5" cy="1077.5" r="7" fill="red" />

      <g fill="none" stroke="#000" strokeWidth="3">
        <path d="M2272 645.5h27l8.5-15 12 27 15.5-27 11.5 27 15.5-27 12 27 6-12h26" />
        <path d="M2109.5 754v26.5M2072.5 780.5h74M2090.5 798.5h37M2072.5 816.5h74M2090.5 834.5h37M2109.5 834.5v26.5" />
        <path d="M2649.5 1159v26M2621.5 1185.5h56M2631 1194.5h37.5M2640 1203.5h19" />
      </g>
      <g stroke="#00f" strokeWidth="3" fill="#00f">
        <path d="M2649.5 781v161M2625 879.5h49.5" />
        <path d="M2625 839.5h49.5L2649.5 879z" strokeWidth="1" />
      </g>

      <g fontFamily='"Liberation Sans", Arial, sans-serif' fontWeight="700" fontSize="39">
        <text x="2310" y="611">R1</text>
        <text x="2310" y="698">1Ω</text>
        <text x="2151" y="770">V1</text>
        <text x="2151" y="824">2V</text>
        <text x="2679" y="824" fill="#00f">D1</text>
        <text x="2679" y="872" fill="#00f">D1N4148</text>
      </g>
      <g fontFamily='"Liberation Mono", "Courier New", monospace' fontWeight="700" fontSize="39" textAnchor="middle">
        <text x="2486" y="373">XMM2</text>
        <text x="2837" y="373">XMM1</text>
      </g>
    </g>
  </svg>
);

const Jack = ({ minus }: { minus?: boolean }) => (
  <svg width="32" height="56" viewBox="0 0 32 56" fill="none" aria-hidden="true">
    <path d={minus ? "M17 16.5h12" : "M10 9h12M16 3v12"} stroke="#000" strokeWidth={minus ? 1 : 2} />
    <circle cx="16" cy={minus ? 39 : 36} r="12" fill="#fff" stroke="#c0c0c0" strokeWidth="2" />
    <circle cx="16" cy={minus ? 39 : 36} r="7" fill="#c8c8c8" />
  </svg>
);

type MeterProps = { name: string; value: string; mode: string; active?: boolean; x: number; y: number };
const Multimeter = ({ name, value, mode, active = false, x, y }: MeterProps) => (
  <Meter $x={x} $y={y} $active={active} aria-label={`Multimeter-${name}`}>
    <MeterTitle $active={active}>
      <span>Multimeter-{name}</span>
      <CloseButton aria-label="Close"><Cross /></CloseButton>
    </MeterTitle>
    <ReadingFrame><Reading>{value}</Reading></ReadingFrame>
    <ModeGroup>
      {["A", "V", "Ω", "dB"].map((m) => (
        <MeterButton key={m} $w={58} $h={39} $on={m === mode} $focus={active && m === mode} aria-pressed={m === mode}>{m}</MeterButton>
      ))}
    </ModeGroup>
    <WaveGroup>
      <MeterButton $w={85} $h={29} aria-label="AC">
        <svg width="24" height="12" viewBox="0 0 24 12" aria-hidden="true"><path d="M1 8l5-6h3l7 8h2l5-6" fill="none" stroke="#000" strokeWidth="1.5" /></svg>
      </MeterButton>
      <MeterButton $w={82} $h={29} $on aria-label="DC" aria-pressed>
        <svg width="22" height="2" aria-hidden="true"><rect width="22" height="2" /></svg>
      </MeterButton>
    </WaveGroup>
    <MeterFoot>
      <Jack />
      <SetSlot><MeterButton $w={142} $h={35}>Set...</MeterButton></SetSlot>
      <Jack minus />
    </MeterFoot>
    <Grip width="11" height="11" aria-hidden="true">
      <path d="M8 0h2v2H8zM4 4h2v2H4zM8 4h2v2H8zM0 8h2v2H0zM4 8h2v2H4zM8 8h2v2H8z" fill="#a8a8a8" />
    </Grip>
  </Meter>
);

/* ---------- page ---------- */

const MENUS = ["_File", "_Edit", "_View", "_Place", "_MCU", "_Simulate", "Tra_nsfer", "_Tools", "_Reports", "_Options", "_Window", "_Help"];

const Tool = ({ name, on, w, children }: { name: string; on?: boolean; w?: number; children: React.ReactNode }) => (
  <ToolButton aria-label={name} $on={on} $w={w}>{children}</ToolButton>
);

const copyGlyph = "M2 3h12l4 4v14H2zM6 9h6M6 13h8M6 17h8M13 8h12l5 5v15H13zM17 16h8M17 20h10M17 24h10";
const undoGlyph = "M1 3v16h15l-5-5c6-4 11 1 8 6l-4 7 5 3C34 20 32 2 20 2 14 2 11 5 8 9z";
const redoGlyph = "M31 3v16H16l5-5c-6-4-11 1-8 6l4 7-5 3C-2 20 0 2 12 2c6 0 9 3 12 7z";
const snapGlyph = "M2 6h28M2 16h28M2 26h28M4 2v8M28 2v8M4 12v8M28 12v8M4 22v8M28 22v8";

const AppTitle = () => (
  <>
    <TitleBar>
      <Chip size={30} />
      <Caption>Design1 - Multisim - [Design1 *]</Caption>
      <CaptionButtons>
        <CaptionButton aria-label="Minimize"><Icon w={20} h={20}><path d="M0 10h20" stroke="#999" /></Icon></CaptionButton>
        <CaptionButton aria-label="Restore"><Icon w={20} h={20}><path d="M1 5h14v14H1zM5 5V1h14v14h-4" stroke="#999" /></Icon></CaptionButton>
        <CaptionButton aria-label="Close"><Cross c="#999" w={2} /></CaptionButton>
      </CaptionButtons>
    </TitleBar>
    <MenuBar>
      <SchematicDoc />
      <MenuList>
        {MENUS.map((m) => {
          const i = m.indexOf("_");
          return <MenuItem key={m}>{m.slice(0, i)}<u>{m[i + 1]}</u>{m.slice(i + 2)}</MenuItem>;
        })}
      </MenuList>
      <ChildButton aria-label="Minimize document"><Icon w={24} h={24}><path d="M3 22h15" stroke="#000" strokeWidth="4" /></Icon></ChildButton>
      <ChildButton aria-label="Restore document"><Icon w={24} h={24}><path d="M1 11h16v12H1zM7 9V3h16v12h-5" stroke="#000" /><path d="M0 9h18v4H0zM6 1h18v4H6z" fill="#000" /></Icon></ChildButton>
      <ChildButton aria-label="Close document"><Cross c="#000" w={4} /></ChildButton>
    </MenuBar>
  </>
);

const Toolbars = () => (
  <>
    <ToolRow>
      <ToolGroup>
        <Tool name="New"><NewFile /></Tool>
        <Tool name="Open"><OpenFile /></Tool>
        <Tool name="Open sample"><OpenFile blue /></Tool>
        <Tool name="Save"><Floppy /></Tool>
        <Divider />
        <Tool name="Print"><Printer /></Tool>
        <Tool name="Print preview"><Preview /></Tool>
        <Divider />
        <Tool name="Cut"><Grey d="M12 1v8l8 10M20 1v8l-8 10M8 21h6v6H8zM18 21h6v6h-6z" /></Tool>
        <Tool name="Copy"><Grey d={copyGlyph} /></Tool>
        <Tool name="Paste"><Paste /></Tool>
        <Divider />
        <Tool name="Undo"><Grey d="" fill={undoGlyph} /></Tool>
        <Tool name="Redo"><Grey d="" fill={redoGlyph} /></Tool>
      </ToolGroup>
      <ToolGroup $before={177} $lead={10}>
        <Tool name="Design toolbox" on><PanelTree /></Tool>
        <Tool name="Spreadsheet view" on><PanelGrid /></Tool>
        <Tool name="Netlist viewer"><PanelParts /></Tool>
        <Tool name="Breadboard"><PanelList /></Tool>
        <Tool name="Grapher" w={48}><PanelGraph /></Tool>
        <Tool name="Postprocessor"><Calculator /></Tool>
        <Tool name="Parent sheet"><Grey d="M3 3h9v7H3zM7 10v18h8M16 17h11v4H16zM16 25h11v4H16zM15 8h8M21 3v9M26 3h4v9" /></Tool>
        <Divider />
        <Tool name="Create component"><Grey d="M4 4l10 10M14 4L4 14M9 2v14M3 9h12M10 18v6h4M16 17h13v9H16z" /></Tool>
        <Tool name="Database manager" w={45}><Grey d="M6 3h8l4 4v5l-4 4H6l-4-4V7zM3 9h14M16 14h9l4 4v5l-4 5h-9l-3-5v-5zM14 21h14M24 10V3M20 6h10" /></Tool>
        <SelectWrap>
          <Select aria-label="In-use list"><option>--- In-Use List ---</option></Select>
          <Icon w={14} h={10}><path d="M1 1l6 7 6-7" stroke="#444" /></Icon>
        </SelectWrap>
        <Divider />
        <Tool name="Electrical rules check" w={46}><CheckRule /></Tool>
        <Tool name="Transfer to layout" w={50}><Transfer fill="#fff" /></Tool>
        <Tool name="Transfer options" w={12}><Arrow turn={90} s={8} /></Tool>
        <Tool name="Back annotate" w={50}><Grey d="M24 4v20h-7M24 5h-5v8" fill="M2 15l9-8v5h8v6h-8v6z" /></Tool>
        <Tool name="Forward annotate" w={44}><Transfer fill="#0ff" /></Tool>
        <Tool name="Annotate options" w={14}><Arrow turn={90} s={8} /></Tool>
        <Divider />
        <Tool name="Find examples"><FindExample /></Tool>
        <Tool name="Web"><Globe /></Tool>
        <Tool name="Help"><Help /></Tool>
      </ToolGroup>
      <ToolGroup $before={1108} $lead={9}>
        <Tool name="Zoom in"><Lens><path d="M12 6h5v12h-5zM8 10h13v5H8z" fill="#800000" /></Lens></Tool>
        <Tool name="Zoom out"><Lens><path d="M8 10h12v5H8z" fill="#008000" /></Lens></Tool>
        <Tool name="Zoom area"><Lens><path d="M9 8h10v9H9z" stroke="#000" /></Lens></Tool>
        <Tool name="Zoom fit"><Lens><path d="M24 1h7v6zM0 23v6h6z" fill="#000" /></Lens></Tool>
        <Tool name="Full screen" w={46}><FullScreen /></Tool>
      </ToolGroup>
      <ToolGroup $before={195} $lead={10}>
        <Tool name="Snap left"><Grey d={snapGlyph + "M12 3v6M18 13v6"} /></Tool>
        <Tool name="Snap right" w={46}><Grey d={snapGlyph} /></Tool>
      </ToolGroup>
    </ToolRow>
    <ToolRow>
      <ToolGroup>
        {partGlyphs.map((g) => <Tool key={g.name} name={g.name}><Grey d={g.d} fill={g.fill} /></Tool>)}
        <Divider />
        <Tool name="MCU"><Grey {...mcuGlyph} /></Tool>
        <Divider />
        <Tool name="Hierarchical block"><Grey {...hierGlyph} /></Tool>
        <Tool name="Bus"><Grey {...busGlyph} /></Tool>
      </ToolGroup>
      <ToolGroup $before={320}>
        <Tool name="Run" on><svg width="16" height="28" aria-hidden="true"><path d="M1 1l14 13L1 27z" fill={SHADE} /></svg></Tool>
        <Tool name="Pause"><Icon w={16} h={18}><path d="M1 1h4v16H1zM11 1h4v16h-4z" fill={NAVY} stroke="#000" /></Icon></Tool>
        <Tool name="Stop"><Icon w={20} h={18}><path d="M1 1h18v16H1z" fill="red" stroke="#000" /></Icon></Tool>
        <svg width="21" height="30" viewBox="0 0 21 30" aria-hidden="true"><path d="M5 19l7-8c-2-4 1-8 5-7l-3 4 2 1 3-3c1 5-2 7-5 6l-7 8z" fill="#fff" stroke="#909090" /></svg>
        <Mode>Interactive</Mode>
      </ToolGroup>
      <ToolGroup $before={133}>
        {["V", "A", "W", "+V", "AV", "-V", "pulse", "gear"].map((k) => <Tool key={k} name={`Probe ${k}`}><Probe kind={k} /></Tool>)}
      </ToolGroup>
    </ToolRow>
  </>
);

export default function App() {
  return (
    <Desktop>
      <Global />
      <Defs />
      <AppTitle />
      <Toolbars />

      <Workspace>
        <Toolbox>
          <PaneHead>
            <PaneTitle>Design Toolbox</PaneTitle>
            <PinButton aria-label="Pin"><Arrow turn={-90} c={SHADE} s={12} /></PinButton>
            <PinButton aria-label="Close toolbox"><Cross s={11} c="#000" w={5} /></PinButton>
          </PaneHead>
          <ToolboxBody>
            <ToolboxIcons>
              <SmallButton aria-label="New design"><NewDesign /></SmallButton>
              <SmallButton aria-label="Open design"><OpenFile /></SmallButton>
              <SmallButton aria-label="Save design"><Floppy /></SmallButton>
              <SmallButton aria-label="Close design">
                <Icon>
                  <path d="M3 10h20v18H3z" fill="#fff" stroke="#000" />
                  <path d="M2 8h22v5H2z" fill={NAVY} />
                  <path d="M7 18h13M7 22h10M7 26h13" stroke={SHADE} />
                  <path d="M23 2h8v3l-5 5z" fill="#800000" /><path d="M24 3l7 7" stroke="#800000" />
                </Icon>
              </SmallButton>
              <Icon w={8} h={40}><path d="M0 8h5v26" stroke="#808000" /><path d="M0 18h3v10H0z" fill="#00f" /><path d="M0 21h2v4H0z" fill="#ff0" /></Icon>
            </ToolboxIcons>
            <Tree>
              <TreeItem>
                <Icon w={21} h={36}><path d="M0 9h3v16H0" stroke={SHADE} strokeWidth="1" /><path d="M6 17.5h9" stroke={SHADE} strokeWidth="1" strokeDasharray="1 1" /></Icon>
                <svg width="22" height="30" aria-hidden="true"><path d="M1 2v26l15-13z" fill="#0f0" stroke="#000" strokeWidth="2" /></svg>
                <span>Design1</span>
              </TreeItem>
              <TreeItem $sel>
                <Icon w={46} h={36}><path d="M32 0v18h14" stroke="#808080" strokeWidth="1" strokeDasharray="1 1" /></Icon>
                <SchematicDoc />
                <span>Design1</span>
              </TreeItem>
              <HScroll>
                <ScrollButton $w={34} $h={32} aria-label="Scroll left"><Chevron turn={90} /></ScrollButton>
                <Part $grow={12} />
                <Part $grow={94} $thumb />
                <ScrollButton $w={34} $h={32} aria-label="Scroll right"><Chevron turn={-90} /></ScrollButton>
              </HScroll>
            </Tree>
          </ToolboxBody>
          <TabLine $pad={2} $foot={3}>
            <Tab $on $w={103}>Hierarchy</Tab>
            <Tab $w={23}>Visibility</Tab>
            <Spinner aria-label="Previous tab"><Arrow turn={180} s={12} /></Spinner>
            <Spinner aria-label="Next tab"><Arrow s={12} /></Spinner>
          </TabLine>
        </Toolbox>

        <DocArea>
          <Frame>
            <Viewport>
              <Canvas>
                <Schematic />
                <Multimeter name="XMM2" value="605.609 mA" mode="A" active x={1504} y={647} />
                <Multimeter name="XMM1" value="1.394 V" mode="V" x={2736} y={663} />
              </Canvas>
              <VScroll>
                <ScrollButton $w={34} $h={36} aria-label="Scroll up"><Chevron turn={180} /></ScrollButton>
                <Part $grow={90} />
                <Part $grow={1385} $thumb />
                <Part $grow={218} />
                <ScrollButton $w={34} $h={36} aria-label="Scroll down"><Chevron /></ScrollButton>
              </VScroll>
            </Viewport>
          </Frame>
          <DocTabs>
            <DocTab><SchematicDoc />Design1 *</DocTab>
            <WindowsSlot>
              <PinButton aria-label="Windows">
                <Icon w={22} h={22}>
                  <path d="M2 13V3h10v3M6 15V7h10v4" stroke={NAVY} />
                  <path d="M6 15V7h9" stroke="#00f" />
                  <path d="M9 11h10v9H9z" stroke={NAVY} fill="#fff" />
                  <path d="M15 2l0 6h6zM19 0h2v3h-2z" fill={NAVY} />
                </Icon>
              </PinButton>
            </WindowsSlot>
          </DocTabs>
        </DocArea>

        <Instruments>
          {instruments.map((it) => (
            <InstrumentButton key={it.name} aria-label={it.name}><InstrumentIcon {...it} /></InstrumentButton>
          ))}
          <hr />
          <InstrumentButton aria-label="LabVIEW instruments">
            <Grey d="M0 8h4M0 15h4M0 22h4M30 15h2M6 1h24M6 29h24" fill="M4 2h26v26H4z" />
          </InstrumentButton>
          <MoreButton aria-label="More LabVIEW instruments"><Arrow c={SHADE} s={8} /></MoreButton>
          <hr />
          <InstrumentButton aria-label="NI ELVISmx instruments">
            <Grey d="M1 11l5-1 8 7 8-6M1 11l9 12 6-4 14-8-12-8M12 23l12-6" />
          </InstrumentButton>
          <MoreButton aria-label="More NI ELVISmx instruments"><Arrow c={SHADE} s={8} /></MoreButton>
          <hr />
          <InstrumentButton aria-label="Current clamp">
            <Grey d="M4 17h8l3 4-3 6H4l-3-6zM5 18h6v8H5zM14 24h18M20 2l4 3h7" fill="M11 17l7-8V3h3v9l-7 9z" />
          </InstrumentButton>
        </Instruments>
      </Workspace>

      <Sheet>
        <SheetRail>
          <RailButton aria-label="Close spreadsheet"><Cross s={11} c="#000" w={5} /></RailButton>
          <RailButton aria-label="Collapse spreadsheet"><Arrow c={SHADE} s={12} /></RailButton>
          <RailTitle><span>Spreadsheet View</span></RailTitle>
        </SheetRail>
        <SheetMain>
          <ListFrame>
            <Log>
              <p>------ Checking SPICE netlist for Design1 - 20 октября 2020 г., 15:42:48 ------</p>
              <p>======= SPICE Netlist check completed, 0 error(s), 0 warning(s) =======</p>
            </Log>
          </ListFrame>
          <TabLine $pad={2} $foot={5}>
            <Tab $w={78}>Results</Tab>
            <Tab $w={66}>Nets</Tab>
            <Tab $w={128}>Components</Tab>
            <Tab $w={138}>Copper layers</Tab>
            <Tab $w={113} $on>Simulation</Tab>
          </TabLine>
        </SheetMain>
      </Sheet>

      <StatusBar>
        <StatusMain>-</StatusMain>
        <StatusCell $w={184}>Design1: Simulating...</StatusCell>
        <StatusCell $w={182}>Tran: 5.097 s</StatusCell>
        <StatusCell $w={65}>
          <Icon w={58} h={28}>
            {[0, 8, 16, 24, 32, 40, 48].map((x) => (
              <path key={x} d={`M${x} 20.5V8.5h6v12`} stroke="#bdbdbd" strokeWidth="1" />
            ))}
          </Icon>
        </StatusCell>
      </StatusBar>

      <Taskbar>
        <TaskButton aria-label="Start">
          <svg width="32" height="32" aria-hidden="true"><path d="M0 5l13-2v12H0zM15 2.5L32 0v15H15zM0 17h13v12L0 27zM15 17h17v15l-17-2.5z" fill="#fff" /></svg>
        </TaskButton>
        <Search>
          <svg width="33" height="32" fill="none" stroke="#111" strokeWidth="2" aria-hidden="true"><circle cx="21" cy="11" r="10" /><path d="M14 18L1 31" /></svg>
          <input type="text" aria-label="Search" placeholder="Введите здесь текст для поиска" />
        </Search>
        <TaskButton aria-label="Cortana">
          <svg width="34" height="34" aria-hidden="true"><circle cx="17" cy="17" r="14" fill="none" stroke="#fff" strokeWidth="4" /></svg>
        </TaskButton>
        <TaskButton aria-label="Task view">
          <Icon w={32} h={32}>
            <path d="M1 1v5h20V1M1 31v-5h20v5M1 10h20v12H1z" stroke="#fff" />
            <path d="M29 1v5M29 16v15" stroke="#fff" /><path d="M27 9h5v6h-5z" fill="#fff" />
          </Icon>
        </TaskButton>
        <Apps>
          <TaskButton aria-label="Edge">
            <svg width="40" height="44" viewBox="0 0 40 44" aria-hidden="true"><path d="M0 20C3 6 12 0 21 0c12 0 19 9 19 20v6H14c0 12 13 13 22 7v8c-14 7-31 1-31-14 0-8 4-13 11-17-2 2-3 5-3 9h15C28 4 8 6 0 20z" fill="#0078d7" /></svg>
          </TaskButton>
          <TaskButton aria-label="Explorer">
            <svg width="42" height="36" viewBox="0 0 42 36" aria-hidden="true">
              <path d="M0 2l1-1h16l3 3h21l1 1v28l-1 1H1l-1-1z" fill="#ffcf4a" />
              <path d="M0 8V1h17l3 3-3 4z" fill="#e09f00" />
              <path d="M7 36V20l2-2h24l2 2v16h-7V25H14v11z" fill="#3b97dd" />
            </svg>
          </TaskButton>
          <TaskButton aria-label="Store">
            <svg width="48" height="46" viewBox="0 0 48 46" aria-hidden="true">
              <path d="M16 14C16-2 31-2 33 14M20 14C20 0 33-2 36 14" fill="none" stroke="#fff" strokeWidth="2" />
              <path d="M0 12h48v32l-2 2H2l-2-2z" fill="#fff" />
              <path d="M14 19h9v9h-9z" fill="#f25022" /><path d="M24 19h9v9h-9z" fill="#7fba00" />
              <path d="M14 29h9v9h-9z" fill="#00a4ef" /><path d="M24 29h9v9h-9z" fill="#ffb900" />
            </svg>
          </TaskButton>
          <TaskButton aria-label="Mail">
            <svg width="48" height="38" viewBox="0 0 48 38" aria-hidden="true">
              <path d="M0 12L24 0l24 12v26H0z" fill="#fff" /><path d="M0 12h48L29 22l11 11L0 13z" fill="#22373f" />
            </svg>
          </TaskButton>
          <TaskButton $on aria-label="Multisim"><Chip size={44} /></TaskButton>
        </Apps>
        <Tray>
          <TrayButton $w={46} aria-label="Hidden icons"><svg width="26" height="16" aria-hidden="true"><path d="M1 15L13 2l12 13" fill="none" stroke="#fff" strokeWidth="2" /></svg></TrayButton>
          <TrayButton $w={48} aria-label="Network">
            <Icon w={32} h={28}><path d="M10 3h21v17H6V12M1 3h8v8H1zM5 11v15M3 6h4M19 20v6M11 26h14" stroke="#fff" /></Icon>
          </TrayButton>
          <TrayButton $w={48} aria-label="Volume">
            <svg width="32" height="28" fill="none" strokeWidth="2" stroke="#fff" aria-hidden="true"><path d="M1 9h5l7-7v24l-7-7H1z" /><path d="M17 10q3 4 0 8" /><g stroke="#7c8696"><path d="M21 6q6 8 0 16M25 2q9 12 0 24" /></g></svg>
          </TrayButton>
          <TrayButton $w={72}>ENG</TrayButton>
          <TrayButton $w={140}>{"15:42\n20.10.2020"}</TrayButton>
          <TrayButton $w={97} aria-label="Notifications">
            <svg width="50" height="50" viewBox="0 0 50 50" aria-hidden="true">
              <path d="M1 3h32v28H21l-6 6v-6H1z" fill="#fff" />
              <path d="M7 10h20M7 17h20M7 24h14" stroke="#1b2740" strokeWidth="2" />
              <circle cx="31" cy="32" r="16" fill="#2b2e36" stroke="#9a9a9a" strokeWidth="2" />
              <text x="31" y="40" fill="#fff" fontSize="22" fontWeight="700" textAnchor="middle">1</text>
            </svg>
          </TrayButton>
          <Peek aria-label="Show desktop" />
        </Tray>
      </Taskbar>
    </Desktop>
  );
}
